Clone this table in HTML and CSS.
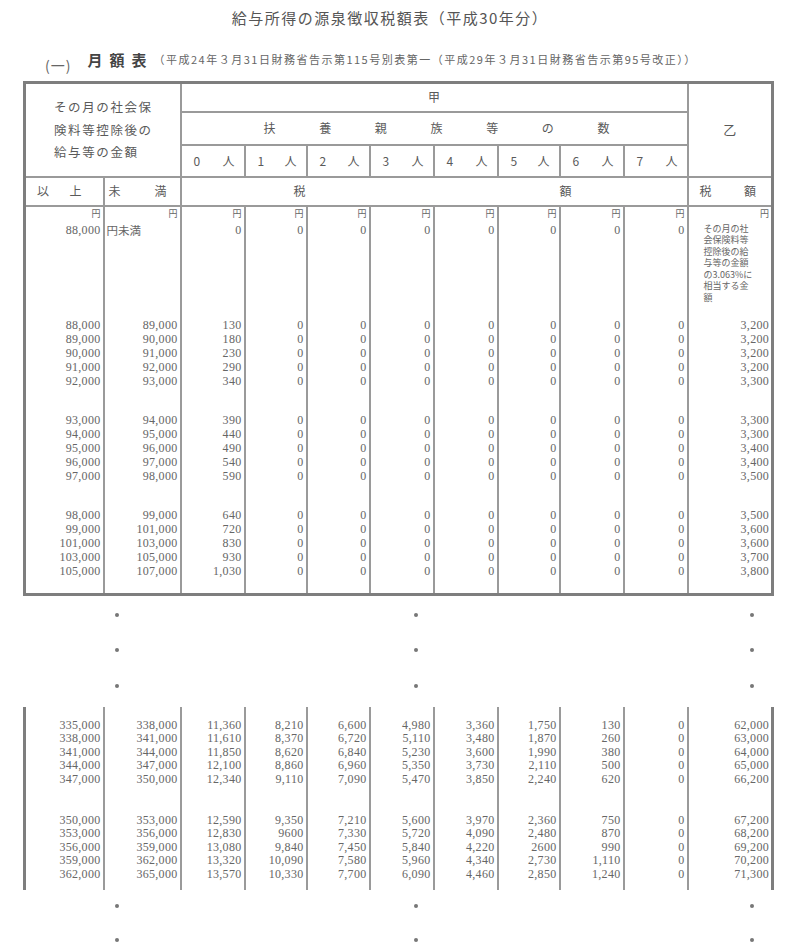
FILE: index.html
```html
<!DOCTYPE html>
<html lang="ja">
<head>
<meta charset="utf-8">
<title>給与所得の源泉徴収税額表（平成30年分）</title>
<link rel="stylesheet" href="styles.css">
</head>
<body>
<div class="title">給与所得の源泉徴収税額表（平成30年分）</div>
<div class="heading">
  <span class="no">(一)</span>
  <span class="name">月額表</span>
  <span class="sub">（平成24年３月31日財務省告示第115号別表第一（平成29年３月31日財務省告示第95号改正））</span>
</div>

<table class="tbl head-tbl">
  <colgroup>
    <col class="c79"><col class="c77"><col class="c64"><col class="c62"><col class="c63"><col class="c64"><col class="c64"><col class="c62"><col class="c64"><col class="c64"><col class="c85">
  </colgroup>
  <tr class="h1">
    <td rowspan="3" colspan="2" class="lhead">その月の社会保<br>険料等控除後の<br>給与等の金額</td>
    <td colspan="8" class="center">甲</td>
    <td rowspan="3" class="center otsu">乙</td>
  </tr>
  <tr class="h2">
    <td colspan="8"><div class="spread fuyo"><span>扶</span><span>養</span><span>親</span><span>族</span><span>等</span><span>の</span><span>数</span></div></td>
  </tr>
  <tr class="h3">
    <td><div class="spread nin"><span>0</span><span>人</span></div></td>
    <td><div class="spread nin"><span>1</span><span>人</span></div></td>
    <td><div class="spread nin"><span>2</span><span>人</span></div></td>
    <td><div class="spread nin"><span>3</span><span>人</span></div></td>
    <td><div class="spread nin"><span>4</span><span>人</span></div></td>
    <td><div class="spread nin"><span>5</span><span>人</span></div></td>
    <td><div class="spread nin"><span>6</span><span>人</span></div></td>
    <td><div class="spread nin"><span>7</span><span>人</span></div></td>
  </tr>
  <tr class="h4">
    <td><div class="spread ijo"><span>以</span><span>上</span></div></td>
    <td><div class="spread miman"><span>未</span><span>満</span></div></td>
    <td colspan="8"><div class="spread zeigaku"><span>税</span><span>額</span></div></td>
    <td><div class="spread zeigaku2"><span>税</span><span>額</span></div></td>
  </tr>
  <tr class="body1">
    <td><div class="yen">円</div><div class="top num">88,000</div>
      <div class="grp num">88,000<br>89,000<br>90,000<br>91,000<br>92,000</div>
      <div class="grp num">93,000<br>94,000<br>95,000<br>96,000<br>97,000</div>
      <div class="grp num">98,000<br>99,000<br>101,000<br>103,000<br>105,000</div></td>
    <td><div class="yen">円</div><div class="top miman-txt">円未満</div>
      <div class="grp num">89,000<br>90,000<br>91,000<br>92,000<br>93,000</div>
      <div class="grp num">94,000<br>95,000<br>96,000<br>97,000<br>98,000</div>
      <div class="grp num">99,000<br>101,000<br>103,000<br>105,000<br>107,000</div></td>
    <td><div class="yen">円</div><div class="top num">0</div>
      <div class="grp num">130<br>180<br>230<br>290<br>340</div>
      <div class="grp num">390<br>440<br>490<br>540<br>590</div>
      <div class="grp num">640<br>720<br>830<br>930<br>1,030</div></td>
    <td><div class="yen">円</div><div class="top num">0</div>
      <div class="grp num">0<br>0<br>0<br>0<br>0</div><div class="grp num">0<br>0<br>0<br>0<br>0</div><div class="grp num">0<br>0<br>0<br>0<br>0</div></td>
    <td><div class="yen">円</div><div class="top num">0</div>
      <div class="grp num">0<br>0<br>0<br>0<br>0</div><div class="grp num">0<br>0<br>0<br>0<br>0</div><div class="grp num">0<br>0<br>0<br>0<br>0</div></td>
    <td><div class="yen">円</div><div class="top num">0</div>
      <div class="grp num">0<br>0<br>0<br>0<br>0</div><div class="grp num">0<br>0<br>0<br>0<br>0</div><div class="grp num">0<br>0<br>0<br>0<br>0</div></td>
    <td><div class="yen">円</div><div class="top num">0</div>
      <div class="grp num">0<br>0<br>0<br>0<br>0</div><div class="grp num">0<br>0<br>0<br>0<br>0</div><div class="grp num">0<br>0<br>0<br>0<br>0</div></td>
    <td><div class="yen">円</div><div class="top num">0</div>
      <div class="grp num">0<br>0<br>0<br>0<br>0</div><div class="grp num">0<br>0<br>0<br>0<br>0</div><div class="grp num">0<br>0<br>0<br>0<br>0</div></td>
    <td><div class="yen">円</div><div class="top num">0</div>
      <div class="grp num">0<br>0<br>0<br>0<br>0</div><div class="grp num">0<br>0<br>0<br>0<br>0</div><div class="grp num">0<br>0<br>0<br>0<br>0</div></td>
    <td><div class="yen">円</div><div class="top num">0</div>
      <div class="grp num">0<br>0<br>0<br>0<br>0</div><div class="grp num">0<br>0<br>0<br>0<br>0</div><div class="grp num">0<br>0<br>0<br>0<br>0</div></td>
    <td><div class="yen">円</div><div class="top note">その月の社<br>会保険料等<br>控除後の給<br>与等の金額<br>の3.063%に<br>相当する金<br>額</div>
      <div class="grp num">3,200<br>3,200<br>3,200<br>3,200<br>3,300</div>
      <div class="grp num">3,300<br>3,300<br>3,400<br>3,400<br>3,500</div>
      <div class="grp num">3,500<br>3,600<br>3,600<br>3,700<br>3,800</div></td>
  </tr>
</table>

<div class="dots dots1">
  <div class="dotcol d1"><i class="dot"></i><i class="dot"></i><i class="dot"></i></div>
  <div class="dotcol d2"><i class="dot"></i><i class="dot"></i><i class="dot"></i></div>
  <div class="dotcol d3"><i class="dot"></i><i class="dot"></i><i class="dot"></i></div>
</div>

<table class="tbl open-tbl">
  <colgroup>
    <col class="c79"><col class="c77"><col class="c64"><col class="c62"><col class="c63"><col class="c64"><col class="c64"><col class="c62"><col class="c64"><col class="c64"><col class="c85">
  </colgroup>
  <tr class="body2">
    <td><div class="grp num">335,000<br>338,000<br>341,000<br>344,000<br>347,000</div><div class="grp num">350,000<br>353,000<br>356,000<br>359,000<br>362,000</div></td>
    <td><div class="grp num">338,000<br>341,000<br>344,000<br>347,000<br>350,000</div><div class="grp num">353,000<br>356,000<br>359,000<br>362,000<br>365,000</div></td>
    <td><div class="grp num">11,360<br>11,610<br>11,850<br>12,100<br>12,340</div><div class="grp num">12,590<br>12,830<br>13,080<br>13,320<br>13,570</div></td>
    <td><div class="grp num">8,210<br>8,370<br>8,620<br>8,860<br>9,110</div><div class="grp num">9,350<br>9600<br>9,840<br>10,090<br>10,330</div></td>
    <td><div class="grp num">6,600<br>6,720<br>6,840<br>6,960<br>7,090</div><div class="grp num">7,210<br>7,330<br>7,450<br>7,580<br>7,700</div></td>
    <td><div class="grp num">4,980<br>5,110<br>5,230<br>5,350<br>5,470</div><div class="grp num">5,600<br>5,720<br>5,840<br>5,960<br>6,090</div></td>
    <td><div class="grp num">3,360<br>3,480<br>3,600<br>3,730<br>3,850</div><div class="grp num">3,970<br>4,090<br>4,220<br>4,340<br>4,460</div></td>
    <td><div class="grp num">1,750<br>1,870<br>1,990<br>2,110<br>2,240</div><div class="grp num">2,360<br>2,480<br>2600<br>2,730<br>2,850</div></td>
    <td><div class="grp num">130<br>260<br>380<br>500<br>620</div><div class="grp num">750<br>870<br>990<br>1,110<br>1,240</div></td>
    <td><div class="grp num">0<br>0<br>0<br>0<br>0</div><div class="grp num">0<br>0<br>0<br>0<br>0</div></td>
    <td><div class="grp num">62,000<br>63,000<br>64,000<br>65,000<br>66,200</div><div class="grp num">67,200<br>68,200<br>69,200<br>70,200<br>71,300</div></td>
  </tr>
</table>

<div class="dots dots2">
  <div class="dotcol d1"><i class="dot"></i><i class="dot"></i></div>
  <div class="dotcol d2"><i class="dot"></i><i class="dot"></i></div>
  <div class="dotcol d3"><i class="dot"></i><i class="dot"></i></div>
</div>
</body>
</html>
```
FILE: styles.css
```css
html, body {
  margin: 0;
  padding: 0;
  background: #ffffff;
}
body {
  width: 800px;
  font-family: "Noto Sans CJK JP", "Noto Sans", sans-serif;
  color: #5a5a5a;
}

.title {
  box-sizing: border-box;
  height: 28px;
  padding: 8px 20px 0 0;
  text-align: center;
  font-size: 15px;
  line-height: 20px;
  letter-spacing: 1.5px;
  color: #555;
}

.heading {
  box-sizing: border-box;
  height: 53px;
  display: flex;
  align-items: flex-start;
  padding-left: 45px;
}
.heading .no {
  margin-top: 27px;
  font-size: 14px;
  line-height: 20px;
  letter-spacing: 1px;
  color: #666;
}
.heading .name {
  margin-top: 22px;
  margin-left: 16px;
  font-size: 15px;
  line-height: 20px;
  font-weight: bold;
  letter-spacing: 7px;
  color: #444;
}
.heading .sub {
  margin-top: 24px;
  font-size: 11px;
  line-height: 14px;
  letter-spacing: 1.5px;
  color: #666;
  white-space: nowrap;
}

.tbl {
  border-collapse: collapse;
  table-layout: fixed;
  width: 751px;
  margin-left: 23px;
  border: 3px solid #7e7e7e;
}
.tbl td {
  border: 2px solid #9a9a9a;
  padding: 0;
  font-size: 12px;
  color: #5a5a5a;
}
.c79 { width: 79px; }
.c77 { width: 77px; }
.c64 { width: 64px; }
.c62 { width: 62px; }
.c63 { width: 63px; }
.c85 { width: 85px; }

.h1 { height: 29px; }
.h2 { height: 33px; }
.h3 { height: 32px; }
.h4 { height: 29px; }

.tbl .lhead {
  padding-left: 28px;
  font-size: 12.5px;
  line-height: 22.5px;
  letter-spacing: 1.6px;
  vertical-align: middle;
  white-space: nowrap;
}
.center {
  text-align: center;
  line-height: 16px;
}
.tbl .otsu {
  font-size: 13px;
}

.spread {
  display: flex;
  justify-content: space-between;
  line-height: 16px;
}
.fuyo { padding: 0 77px 0 82px; }
.nin { padding: 0 9px 0 12px; }
.ijo { padding: 0 21px 0 11px; }
.miman { padding: 0 13px 0 4px; }
.zeigaku { padding: 0 115px 0 112px; }
.zeigaku2 { padding: 0 15px 0 11px; }

.body1 td,
.body2 td {
  vertical-align: top;
}
.body1 td {
  padding-bottom: 15px;
}
.yen {
  height: 13px;
  line-height: 13px;
  font-size: 9px;
  text-align: right;
  padding-right: 2px;
  color: #666;
}
.top {
  margin-top: 3px;
  height: 95px;
  line-height: 14px;
}
.num {
  font-family: "Liberation Serif", serif;
  font-size: 12px;
  letter-spacing: 0.3px;
  text-align: right;
  padding-right: 2px;
  color: #666;
}
.miman-txt {
  padding-left: 2px;
  font-size: 11.5px;
  color: #666;
}
.note {
  padding-left: 15px;
  font-size: 9px;
  line-height: 11.6px;
  color: #666;
  white-space: nowrap;
}
.body1 .grp {
  line-height: 14px;
}
.body1 .grp + .grp {
  margin-top: 25px;
}

.open-tbl {
  border-top: none;
  border-bottom: none;
}
.open-tbl td {
  border-top: none;
  border-bottom: none;
}
.body2 td {
  padding: 12px 0 8.5px 0;
}
.body2 .grp {
  line-height: 13.5px;
}
.body2 .grp + .grp {
  margin-top: 27.5px;
}

.dots {
  display: flex;
  box-sizing: border-box;
}
.dots1 {
  height: 111px;
  padding-top: 17px;
}
.dots1 .dotcol { gap: 31.5px; }
.dots2 {
  height: 65px;
  padding-top: 14px;
}
.dots2 .dotcol { gap: 30px; }
.dotcol {
  display: flex;
  flex-direction: column;
  width: 4px;
}
.d1 { margin-left: 115px; }
.d2 { margin-left: 295px; }
.d3 { margin-left: 332px; }
.dot {
  display: block;
  width: 4px;
  height: 4px;
  border-radius: 50%;
  background: #777;
}
```
